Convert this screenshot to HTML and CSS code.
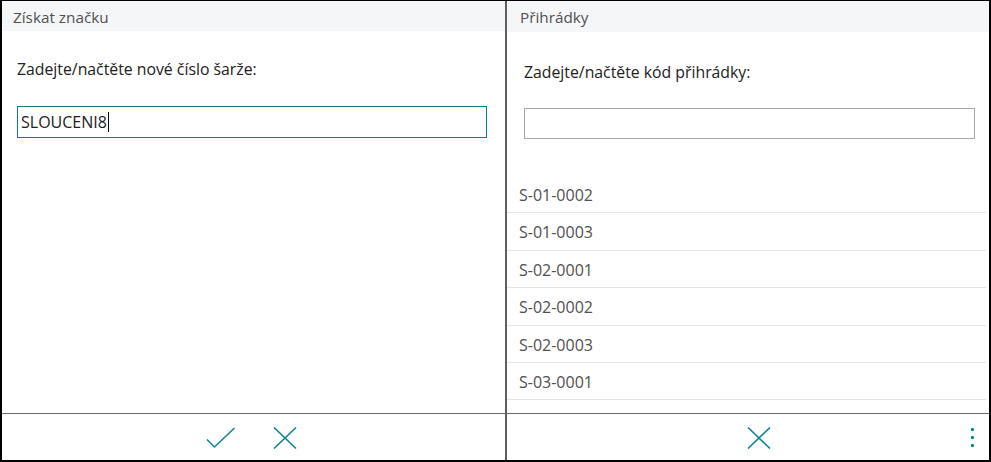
FILE: index.html
```html
<!DOCTYPE html>
<html lang="cs">
<head>
<meta charset="utf-8">
<link rel="stylesheet" href="styles.css">
</head>
<body>
<div class="app">
  <section class="panel left">
    <header class="phead">Získat značku</header>
    <div class="pbody">
      <div class="label">Zadejte/načtěte nové číslo šarže:</div>
      <div class="input active">SLOUCENI8<span class="caret"></span></div>
    </div>
    <footer class="pfoot">
      <svg class="ico" width="30" height="22" viewBox="0 0 30 22"><path d="M1 12.5 L8.5 20 L28.5 1" fill="none" stroke="#0f8594" stroke-width="1.6"/></svg>
      <svg class="ico" width="24" height="22" viewBox="0 0 24 22"><path d="M1 0.5 L23 21.5 M23 0.5 L1 21.5" fill="none" stroke="#0f8594" stroke-width="1.6"/></svg>
    </footer>
  </section>
  <section class="panel right">
    <header class="phead">Přihrádky</header>
    <div class="pbody">
      <div class="label">Zadejte/načtěte kód přihrádky:</div>
      <div class="input"></div>
      <ul class="list">
        <li>S-01-0002</li>
        <li>S-01-0003</li>
        <li>S-02-0001</li>
        <li>S-02-0002</li>
        <li>S-02-0003</li>
        <li>S-03-0001</li>
        <li></li>
      </ul>
    </div>
    <footer class="pfoot">
      <svg class="ico" width="24" height="22" viewBox="0 0 24 22"><path d="M1 0.5 L23 21.5 M23 0.5 L1 21.5" fill="none" stroke="#0f8594" stroke-width="1.6"/></svg>
      <span class="kebab"><i></i><i></i><i></i></span>
    </footer>
  </section>
</div>
</body>
</html>
```
FILE: styles.css
```css
html, body { margin: 0; padding: 0; background: #fff; }
body { font-family: "Open Sans", "Noto Sans", sans-serif; color: #212121; }
.app {
  width: 991px; height: 462px; box-sizing: border-box;
  border: 2px solid #000; border-top-width: 1px;
  display: flex;
}
.panel { display: flex; flex-direction: column; min-width: 0; }
.left { width: 503px; border-right: 2px solid #5f5f5f; }
.right { flex: 1; }
.phead {
  background: #f5f6f8; height: 30px; line-height: 32px;
  font-size: 15.3px; color: #505050; padding-left: 11px;
}
.right .phead { height: 31px; padding-left: 13px; }
.pbody { flex: 1; overflow: hidden; }
.label { font-size: 15.8px; line-height: 20px; }
.left .label { padding: 28px 0 0 15px; }
.right .label { padding: 30px 0 0 17px; }
.input {
  box-sizing: border-box; height: 32px; border: 1px solid #a6a6a6;
  font-size: 16px; line-height: 30px; padding-left: 3px; color: #212121;
}
.left .input { margin: 27px 18px 0 15px; border-color: #0a7f86; }
.right .input { margin: 26px 14px 0 17px; height: 31px; }
.caret { display: inline-block; width: 1px; height: 20px; background: #000; vertical-align: -4px; margin-left: 1px; }
.list { list-style: none; margin: 37px 3px 0 0; padding: 0; }
.list li {
  height: 36.4px; border-bottom: 1px solid #e6e6e6; box-sizing: content-box;
  font-size: 16px; line-height: 38px; padding-left: 12px; color: #505050;
}
.pfoot {
  height: 46px; border-top: 1px solid #6a6a6a;
  display: flex; align-items: center; justify-content: center; gap: 37px;
  position: relative;
}
.left .pfoot { padding-right: 5px; }
.right .pfoot { padding-left: 22px; }
.ico { display: block; margin-top: 2px; }
.kebab { position: absolute; right: 15px; top: 14px; display: flex; flex-direction: column; gap: 5px; }
.kebab i { display: block; width: 3px; height: 3px; background: #0f8594; border-radius: 1px; }
```
